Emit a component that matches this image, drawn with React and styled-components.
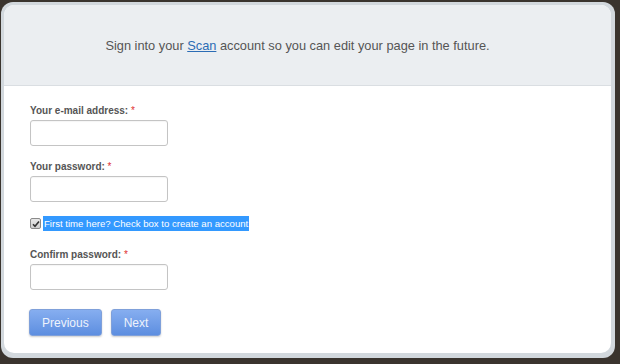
import React from "react";
import styled, { createGlobalStyle } from "styled-components";

const GlobalStyle = createGlobalStyle`
  html, body {
    margin: 0;
    padding: 0;
    background: #3a342e;
  }
  body {
    font-family: "Liberation Sans", Arial, sans-serif;
  }
`;

const Frame = styled.div`
  width: 614px;
  height: 356px;
  margin: 2px 0 0 1px;
  box-sizing: border-box;
  padding: 3px 4px 5px 3px;
  background: #d2d8dd;
  border-radius: 12px;
  display: flex;
`;

const Panel = styled.div`
  flex: 1;
  background: #fff;
  border-radius: 10px;
  overflow: hidden;
  display: flex;
  flex-direction: column;
`;

const Header = styled.div`
  height: 80px;
  background: #ebeef1;
  border-bottom: 1px solid #dadee2;
  display: flex;
  align-items: center;
  justify-content: center;
  padding-right: 20px;
  font-size: 12.8px;
  color: #555;
`;

const Link = styled.a`
  color: #2b6cb5;
  text-decoration: underline;
`;

const Body = styled.div`
  padding: 18px 0 0 26px;
  display: flex;
  flex-direction: column;
  align-items: flex-start;
`;

const Label = styled.label`
  display: block;
  font-size: 10px;
  font-weight: bold;
  line-height: 14px;
  color: #555;
  margin-top: ${(p) => p.$top || 0}px;
`;

const Star = styled.span`
  color: #e03030;
  font-weight: normal;
`;

const Input = styled.input`
  display: block;
  box-sizing: border-box;
  width: 138px;
  height: 26px;
  margin-top: 2px;
  border: 1px solid #c4c4c4;
  border-radius: 3px;
  background: #fff;
  box-shadow: inset 0 1px 1px rgba(0, 0, 0, 0.04);
  outline: none;
`;

const CheckRow = styled.div`
  display: flex;
  align-items: center;
  gap: 2px;
  margin-top: 14px;
  height: 15px;
`;

const Box = styled.span`
  width: 9px;
  height: 9px;
  border: 1px solid #8a8a8a;
  border-radius: 2px;
  background: linear-gradient(#e8e8e8, #cfcfcf);
  display: flex;
  align-items: center;
  justify-content: center;
`;

const Selected = styled.span`
  background: #3399ff;
  color: #fff;
  font-size: 9.6px;
  line-height: 15px;
  padding: 0 1px;
`;

const Buttons = styled.div`
  display: flex;
  gap: 9px;
  margin-top: 19px;
  margin-left: -1px;
`;

const Button = styled.button`
  height: 27px;
  padding: 0 ${(p) => p.$pad}px;
  border: 1px solid #7fa0da;
  border-radius: 3px;
  background: linear-gradient(#86aef0, #5d8ee0);
  color: #eef3fc;
  font-family: "Liberation Sans", Arial, sans-serif;
  font-size: 12px;
  box-shadow: 0 1px 2px rgba(0, 0, 0, 0.2);
`;

export default function App() {
  return (
    <>
      <GlobalStyle />
      <Frame>
        <Panel>
          <Header>
            <span>
              Sign into your <Link href="#">Scan</Link> account so you can edit your page in the future.
            </span>
          </Header>
          <Body>
            <Label>
              Your e-mail address: <Star>*</Star>
            </Label>
            <Input type="text" />
            <Label $top={14}>
              Your password: <Star>*</Star>
            </Label>
            <Input type="password" />
            <CheckRow>
              <Box>
                <svg width="8" height="8" viewBox="0 0 8 8">
                  <path d="M1 4.2 L3 6.3 L7 1.5" fill="none" stroke="#333" strokeWidth="1.6" />
                </svg>
              </Box>
              <Selected>First time here? Check box to create an account</Selected>
            </CheckRow>
            <Label $top={17}>
              Confirm password: <Star>*</Star>
            </Label>
            <Input type="password" />
            <Buttons>
              <Button $pad={12}>Previous</Button>
              <Button $pad={12}>Next</Button>
            </Buttons>
          </Body>
        </Panel>
      </Frame>
    </>
  );
}
